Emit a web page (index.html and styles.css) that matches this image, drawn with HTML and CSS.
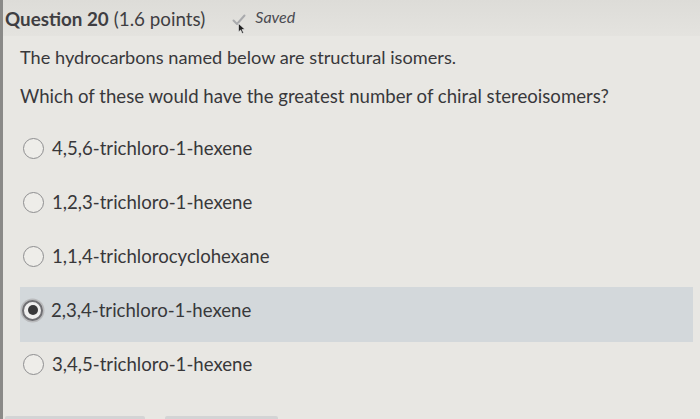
FILE: index.html
```html
<!DOCTYPE html>
<html>
<head>
<meta charset="utf-8">
<link rel="stylesheet" href="styles.css">
</head>
<body>
<div class="page">
  <header class="head">
    <span class="qnum">Question 20</span>
    <span class="pts">(1.6 points)</span>
    <span class="saved">
      <svg class="check" width="14" height="12" viewBox="0 0 14 12"><path d="M1.5 6.5 L5 10 L12.5 1.5" fill="none" stroke="#a9aaad" stroke-width="2" stroke-linecap="round" stroke-linejoin="round"/></svg>
      <svg class="cursor" width="8" height="11" viewBox="0 0 8 11"><path d="M0.5 0.5 L0.5 9 L2.6 7 L4.2 10.5 L5.6 9.8 L4 6.5 L7 6.5 Z" fill="#222" stroke="#eee" stroke-width="0.6"/></svg>
      <em>Saved</em>
    </span>
  </header>
  <main class="body">
    <p class="stem">The hydrocarbons named below are structural isomers.</p>
    <p class="stem q">Which of these would have the greatest number of chiral stereoisomers?</p>
    <ul class="opts">
      <li class="opt"><span class="radio"></span>4,5,6-trichloro-1-hexene</li>
      <li class="opt"><span class="radio"></span>1,2,3-trichloro-1-hexene</li>
      <li class="opt"><span class="radio"></span>1,1,4-trichlorocyclohexane</li>
      <li class="opt sel"><span class="radio on"></span>2,3,4-trichloro-1-hexene</li>
      <li class="opt after"><span class="radio"></span>3,4,5-trichloro-1-hexene</li>
    </ul>
    <div class="btns">
      <span class="btn b1"></span>
      <span class="btn b2"></span>
    </div>
  </main>
</div>
</body>
</html>
```
FILE: styles.css
```css
html, body {
  margin: 0;
  padding: 0;
}
body {
  width: 700px;
  height: 419px;
  overflow: hidden;
  background: #e8e7e3;
  font-family: Lato, "Liberation Sans", sans-serif;
  color: #38383b;
}
.page {
  height: 419px;
  border-left: 3px solid #8a8a88;
  box-sizing: border-box;
  display: flex;
  flex-direction: column;
}
.head {
  height: 36px;
  display: flex;
  align-items: center;
  padding-left: 2px;
  background: linear-gradient(#dddcd8, #e4e3df);
  font-size: 18.8px;
}
.qnum {
  font-weight: bold;
  color: #3f3e42;
}
.pts {
  margin-left: 5px;
  color: #3f3e42;
}
.saved {
  margin-left: 27px;
  display: flex;
  align-items: center;
  position: relative;
  font-size: 16px;
  color: #4a4a50;
}
.check {
  margin-top: 3px;
}
.cursor {
  position: absolute;
  left: 6px;
  top: 13px;
}
.saved em {
  margin-left: 9px;
  margin-top: -3px;
}
.body {
  flex: 1;
  display: flex;
  flex-direction: column;
  padding-left: 17px;
  padding-right: 7px;
}
.stem {
  margin: 0;
  font-size: 18.2px;
  line-height: 22px;
  margin-top: 10px;
}
.stem.q {
  margin-top: 17px;
  font-size: 18.6px;
}
.opts {
  list-style: none;
  margin: 14px 0 0;
  padding: 0;
  display: flex;
  flex-direction: column;
}
.opt {
  height: 54px;
  display: flex;
  align-items: center;
  font-size: 18.6px;
  padding-left: 3px;
  color: #38383a;
  box-sizing: border-box;
}
.opt.sel {
  background: #d3d8db;
  margin-top: 4px;
  height: 55px;
  padding-bottom: 9px;
  padding-left: 2px;
}
.opt.after {
  margin-top: -5px;
}
.radio {
  width: 21px;
  height: 21px;
  border: 1.5px solid #8e8e90;
  border-radius: 50%;
  background: #eeede9;
  margin-right: 8px;
  box-sizing: border-box;
  flex: none;
  display: flex;
  align-items: center;
  justify-content: center;
}
.radio.on {
  width: 21px;
  height: 21px;
  margin-left: 0;
  margin-right: 8px;
  border: 2px solid #6f6f73;
  background: #efefef;
  box-shadow: 0 0 0 1.5px #b9babc;
}
.radio.on::after {
  content: "";
  width: 10px;
  height: 10px;
  border-radius: 50%;
  background: #38383a;
}
.btns {
  margin-top: auto;
  display: flex;
  gap: 20px;
  margin-left: -15px;
}
.btn {
  height: 3px;
  background: #d3d4d5;
  border-radius: 2px 2px 0 0;
}
.b1 { width: 140px; }
.b2 { width: 113px; }
```
